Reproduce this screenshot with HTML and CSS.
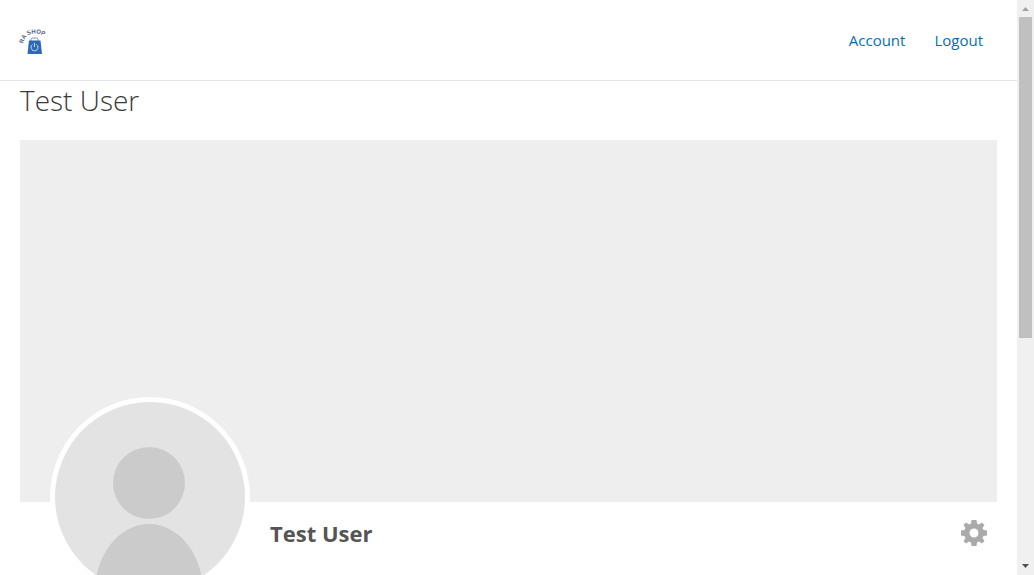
FILE: index.html
```html
<!DOCTYPE html>
<html lang="en">
<head>
<meta charset="utf-8">
<meta name="viewport" content="width=device-width, initial-scale=1">
<title>Test User</title>
<link rel="stylesheet" href="styles.css">
</head>
<body>
<div class="page">
  <header class="site-header">
    <a class="logo" href="#" aria-label="Home">
      <svg width="27" height="27" viewBox="0 0 27 27">
        <defs><path id="arc" d="M3 16Q5 6 14 5.500Q22 5 30 12"/></defs>
        <text class="logo-text"><textPath href="#arc">RA SHOP</textPath></text>
        <path d="M11 13V11.500Q11 10 12.500 10H16.500Q18 10 18 11.500V13" fill="none" stroke="#6c93c4" stroke-width="1"/>
        <path d="M9 12.500H20.500L22 26H7.500Z" fill="#2d68b2"/>
        <path d="M12.500 16.500A3.500 3.500 0 1 0 16.500 16.500M14.500 15V19" fill="none" stroke="#c5dcf3" stroke-width="1"/>
      </svg>
    </a>
    <nav class="nav">
      <a href="#">Account</a>
      <a href="#">Logout</a>
    </nav>
  </header>
  <main class="content">
    <h1 class="title">Test User</h1>
    <div class="cover"></div>
    <section class="profile">
      <a class="avatar" href="#" aria-label="Profile photo">
        <svg viewBox="0 0 190 190">
          <rect width="190" height="190" fill="#e3e3e3"/>
          <circle cx="94" cy="81" r="36" fill="#cbcbcb"/>
          <ellipse cx="94" cy="190" rx="54" ry="68" fill="#cbcbcb"/>
        </svg>
      </a>
      <h2 class="name">Test User</h2>
      <button class="settings" type="button" aria-label="Settings">
        <svg width="26" height="26" viewBox="-13 -13 26 26">
          <path fill="#aaa" fill-rule="evenodd" d="M-2.500-13H2.500L3-9.500L5-8.500L8-10.500L10.500-8L8.500-5L9.500-3L13-2.500V2.500L9.500 3L8.500 5L10.500 8L8 10.500L5 8.500L3 9.500L2.500 13H-2.500L-3 9.500L-5 8.500L-8 10.500L-10.500 8L-8.500 5L-9.500 3L-13 2.500V-2.500L-9.500-3L-8.500-5L-10.500-8L-8-10.500L-5-8.500L-3-9.500ZM4.500 0A4.500 4.500 0 1 0-4.500 0A4.500 4.500 0 1 0 4.500 0Z"/>
        </svg>
      </button>
    </section>
  </main>
</div>
<div class="scrollbar" aria-hidden="true">
  <svg class="arrow" viewBox="0 0 17 17"><path d="M5 11H12L8.500 7Z" fill="#a3a3a3"/></svg>
  <div class="track"><div class="thumb"></div></div>
  <svg class="arrow" viewBox="0 0 17 17"><path d="M5 6H12L8.500 10Z" fill="#505050"/></svg>
</div>
</body>
</html>
```
FILE: styles.css
```css
* { box-sizing: border-box; }
body {
  margin: 0;
  height: 100vh;
  display: flex;
  overflow: hidden;
  background: #fff;
  color: #3a3a3a;
  font-family: "Open Sans", "Noto Sans", sans-serif;
}
.page { flex: 1; min-width: 0; overflow: hidden; }
.site-header {
  display: flex;
  align-items: center;
  justify-content: space-between;
  height: 81px;
  padding: 0 20px;
  border-bottom: 1px solid #e6e6e6;
}
.logo, .logo svg { display: block; }
.logo { padding-top: 2px; }
.logo svg { overflow: visible; }
.logo-text { font: bold 6px "Liberation Sans", sans-serif; fill: #4f6484; }
.nav { display: flex; gap: 29px; padding-right: 14px; }
.nav a { color: #0170b9; font-size: 15px; line-height: 24px; text-decoration: none; }
.content { padding: 0 20px; }
.title { margin: 0 0 21px; font-size: 28px; line-height: 38px; font-weight: 300; }
.cover { height: 362px; background: #eee; }
.profile { display: flex; align-items: flex-start; padding: 0 10px 0 30px; }
.avatar {
  flex: none;
  width: 200px;
  height: 200px;
  margin-top: -105px;
  border: 5px solid #fff;
  border-radius: 50%;
  background: #fff;
  overflow: hidden;
}
.avatar svg { display: block; width: 100%; }
.name { flex: 1; margin: 15px 0 0 20px; color: #555; font-size: 22px; line-height: 32px; font-weight: 700; }
.settings { margin-top: 18px; padding: 0; border: 0; background: none; }
.settings svg { display: block; }
.scrollbar { flex: none; width: 17px; display: flex; flex-direction: column; background: #f0f0f0; }
.arrow { display: block; width: 17px; height: 17px; }
.track { flex: 1; padding: 0 2px; }
.thumb { height: 59.4%; background: #c0c0c0; }
```
